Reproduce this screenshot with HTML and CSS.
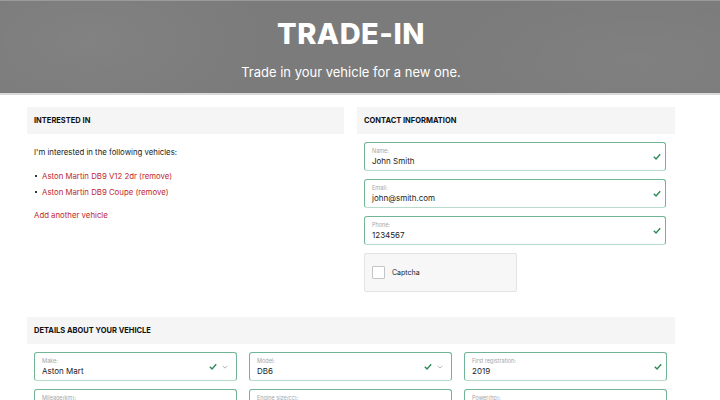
FILE: index.html
```html
<!DOCTYPE html>
<html lang="en">
<head>
    <meta charset="UTF-8">
    <title>Trade-in</title>
    <link rel="stylesheet" href="styles.css">
</head>
<body>
    <header class="hero">
        <h1>TRADE-IN</h1>
        <p>Trade in your vehicle for a new one.</p>
    </header>

    <main class="page">
        <div class="columns">
            <section class="panel">
                <h2 class="panel-head">Interested in</h2>
                <div class="panel-body">
                    <p class="intro">I'm interested in the following vehicles:</p>
                    <ul class="vehicles">
                        <li><a href="#">Aston Martin DB9 V12 2dr (remove)</a></li>
                        <li><a href="#">Aston Martin DB9 Coupe (remove)</a></li>
                    </ul>
                    <a href="#" class="add-link">Add another vehicle</a>
                </div>
            </section>

            <section class="panel">
                <h2 class="panel-head">Contact information</h2>
                <div class="panel-body fields">
                    <div class="field">
                        <div class="field-text">
                            <span class="field-label">Name:</span>
                            <span class="field-value">John Smith</span>
                        </div>
                        <svg class="check" viewBox="0 0 10 8"><path d="M1 4.2 L3.8 7 L9 1.2"/></svg>
                    </div>
                    <div class="field">
                        <div class="field-text">
                            <span class="field-label">Email:</span>
                            <span class="field-value">john@smith.com</span>
                        </div>
                        <svg class="check" viewBox="0 0 10 8"><path d="M1 4.2 L3.8 7 L9 1.2"/></svg>
                    </div>
                    <div class="field">
                        <div class="field-text">
                            <span class="field-label">Phone:</span>
                            <span class="field-value">1234567</span>
                        </div>
                        <svg class="check" viewBox="0 0 10 8"><path d="M1 4.2 L3.8 7 L9 1.2"/></svg>
                    </div>
                    <div class="captcha">
                        <span class="captcha-box"></span>
                        <span>Captcha</span>
                    </div>
                </div>
            </section>
        </div>

        <section class="panel details">
            <h2 class="panel-head">Details about your vehicle</h2>
            <div class="panel-body grid">
                <div class="field select">
                    <div class="field-text">
                        <span class="field-label">Make:</span>
                        <span class="field-value">Aston Mart</span>
                    </div>
                    <svg class="check" viewBox="0 0 10 8"><path d="M1 4.2 L3.8 7 L9 1.2"/></svg>
                    <svg class="chevron" viewBox="0 0 8 5"><path d="M1 1 L4 4 L7 1"/></svg>
                </div>
                <div class="field select">
                    <div class="field-text">
                        <span class="field-label">Model:</span>
                        <span class="field-value">DB6</span>
                    </div>
                    <svg class="check" viewBox="0 0 10 8"><path d="M1 4.2 L3.8 7 L9 1.2"/></svg>
                    <svg class="chevron" viewBox="0 0 8 5"><path d="M1 1 L4 4 L7 1"/></svg>
                </div>
                <div class="field">
                    <div class="field-text">
                        <span class="field-label">First registration:</span>
                        <span class="field-value">2019</span>
                    </div>
                    <svg class="check" viewBox="0 0 10 8"><path d="M1 4.2 L3.8 7 L9 1.2"/></svg>
                </div>
                <div class="field">
                    <div class="field-text">
                        <span class="field-label">Mileage(km):</span>
                        <span class="field-value"></span>
                    </div>
                </div>
                <div class="field">
                    <div class="field-text">
                        <span class="field-label">Engine size(cc):</span>
                        <span class="field-value"></span>
                    </div>
                </div>
                <div class="field">
                    <div class="field-text">
                        <span class="field-label">Power(hp):</span>
                        <span class="field-value"></span>
                    </div>
                </div>
            </div>
        </section>
    </main>
</body>
</html>
```

FILE: styles.css
```css
html, body {
    margin: 0;
    padding: 0;
    font-family: 'Inter', 'Liberation Sans', sans-serif;
    color: #222;
    background: #fff;
}

.hero {
    height: 95px;
    box-sizing: border-box;
    padding: 16px 18px 0 0;
    text-align: center;
    color: #fff;
    border-top: 1px solid #9a9a9a;
    border-bottom: 2px solid #d9d9d9;
    background:
        radial-gradient(ellipse 180px 90px at 90px 40px, rgba(255, 255, 255, 0.05), transparent),
        radial-gradient(ellipse 200px 80px at 640px 60px, rgba(255, 255, 255, 0.04), transparent),
        #7b7b7b;
}

.hero h1 {
    margin: 0;
    font-size: 29px;
    font-weight: 800;
    letter-spacing: 0.5px;
    line-height: 34px;
}

.hero p {
    margin: 13px 0 0;
    font-size: 13px;
    font-weight: 400;
}

.page {
    width: 648px;
    margin-left: 27px;
    padding-top: 12px;
}

.columns {
    display: grid;
    grid-template-columns: 317px 318px;
    column-gap: 13px;
}

.panel-head {
    margin: 0;
    height: 27px;
    line-height: 28px;
    padding: 0 7px;
    background: #f5f5f5;
    font-size: 7.5px;
    font-weight: 700;
    text-transform: uppercase;
    color: #111;
}

.panel-body {
    padding: 8px 9px 0 7px;
}

.intro {
    margin: 5px 0 11px;
    font-size: 7.8px;
    color: #222;
}

.vehicles {
    margin: 0;
    padding: 0;
    list-style: none;
}

.vehicles li {
    position: relative;
    padding-left: 8px;
    font-size: 7.8px;
    line-height: 16px;
}

.vehicles li::before {
    content: "";
    position: absolute;
    left: 1px;
    top: 7px;
    width: 2px;
    height: 2px;
    background: #333;
}

.vehicles a, .add-link {
    color: #c0282d;
    text-decoration: none;
}

.add-link {
    display: block;
    margin-top: 10px;
    font-size: 7.8px;
}

.fields {
    display: flex;
    flex-direction: column;
    gap: 8px;
}

.field {
    display: flex;
    align-items: center;
    height: 29px;
    box-sizing: border-box;
    padding: 0 4px 0 7px;
    border: 1px solid #72b596;
    border-bottom-color: #b7dccb;
    border-radius: 3px;
    background: #fff;
}

.field.select {
    padding-right: 8px;
}

.field-text {
    flex: 1;
    display: flex;
    flex-direction: column;
    padding-top: 1px;
}

.field-label {
    font-size: 5.5px;
    color: #a5a5a5;
    line-height: 8px;
}

.field-value {
    font-size: 8px;
    color: #222;
    line-height: 12px;
    min-height: 12px;
}

.check {
    width: 8px;
    height: 7px;
    fill: none;
    stroke: #2e8b57;
    stroke-width: 1.8;
}

.chevron {
    width: 6px;
    height: 4px;
    margin-left: 5px;
    fill: none;
    stroke: #999;
    stroke-width: 1;
}

.captcha {
    display: flex;
    align-items: center;
    gap: 7px;
    width: 153px;
    height: 39px;
    box-sizing: border-box;
    padding-left: 7px;
    background: #f7f7f7;
    border: 1px solid #e3e3e3;
    border-radius: 2px;
    font-size: 7px;
    color: #222;
}

.captcha-box {
    width: 13px;
    height: 13px;
    box-sizing: border-box;
    background: #fff;
    border: 1px solid #c4c4c4;
    border-radius: 1px;
}

.details {
    margin-top: 25px;
}

.grid {
    display: grid;
    grid-template-columns: repeat(3, 203px);
    column-gap: 12px;
    row-gap: 8px;
}
```
